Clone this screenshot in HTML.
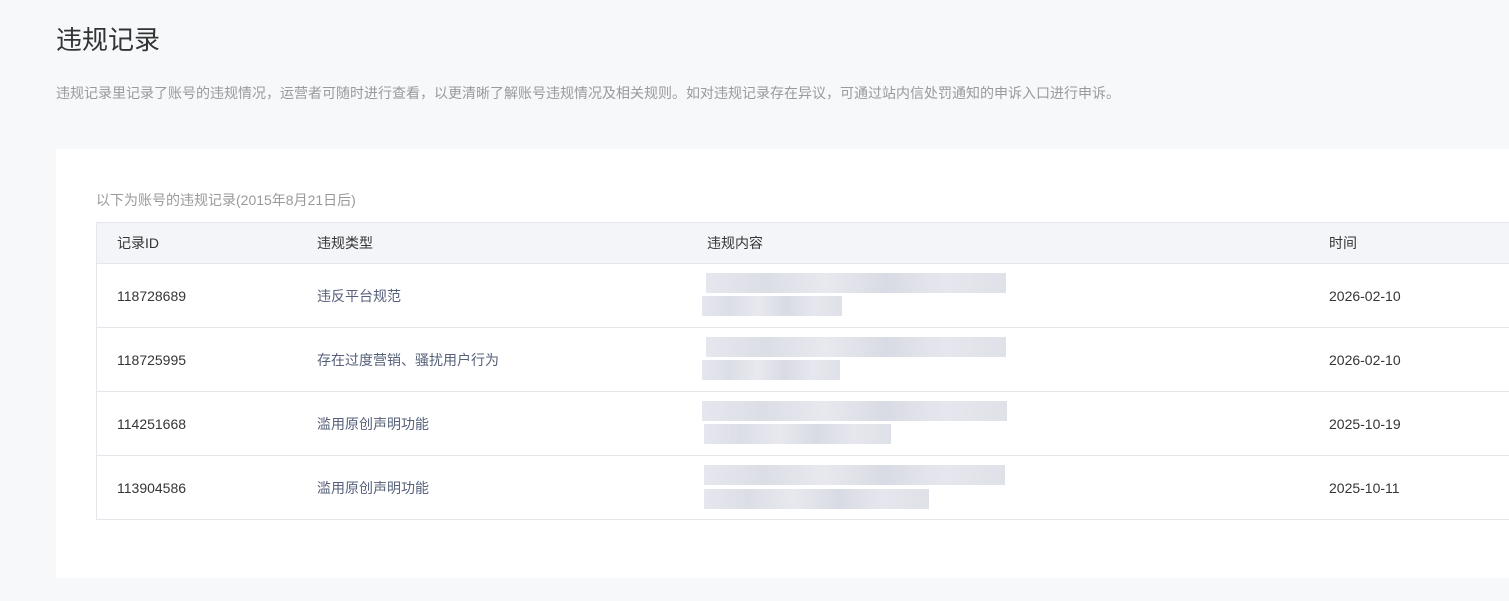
<!DOCTYPE html>
<html><head><meta charset="utf-8"><style>
body{margin:0;width:1509px;height:601px;background:#f7f8fa;font-family:"Liberation Sans","Noto Sans CJK SC",sans-serif;overflow:hidden;position:relative}
.t{position:absolute;left:56px;top:20px;font-size:26px;color:#333}
.d{position:absolute;left:56px;top:83px;font-size:14px;color:#9a9a9a;white-space:nowrap}
.card{position:absolute;left:56px;top:149px;width:1460px;height:429px;background:#fff}
.s{position:absolute;left:96px;top:190px;font-size:14px;color:#9a9a9a}
table{position:absolute;left:96px;top:222px;width:1420px;border-collapse:collapse;font-size:14px;color:#353535}
td,th{border-top:1px solid #e4e6eb;text-align:left;font-weight:normal;padding:0 0 0 20px;position:relative}
tr:last-child td{border-bottom:1px solid #e4e6eb}
th{background:#f4f5f8;height:40px;color:#353535}
td{height:63px}
tr>*:first-child{border-left:1px solid #e4e6eb}
.ty{color:#56607a}
.b{position:absolute;height:20px;background:linear-gradient(90deg,#e6e7ee,#dcdee6 20%,#e8e9ef 40%,#d9dbe4 60%,#e6e7ee 80%,#dfe1e8)}
</style></head><body>
<div class="t">违规记录</div>
<div class="d">违规记录里记录了账号的违规情况，运营者可随时进行查看，以更清晰了解账号违规情况及相关规则。如对违规记录存在异议，可通过站内信处罚通知的申诉入口进行申诉。</div>
<div class="card"></div>
<div class="s">以下为账号的违规记录(2015年8月21日后)</div>
<table>
<tr><th style="width:180px">记录ID</th><th style="width:370px">违规类型</th><th style="width:602px">违规内容</th><th>时间</th></tr>
<tr><td>118728689</td><td class="ty">违反平台规范</td><td><div class="b" style="left:19px;top:9px;width:300px"></div><div class="b" style="left:15px;top:32px;width:140px"></div></td><td>2026-02-10</td></tr>
<tr><td>118725995</td><td class="ty">存在过度营销、骚扰用户行为</td><td><div class="b" style="left:19px;top:9px;width:300px"></div><div class="b" style="left:15px;top:32px;width:138px"></div></td><td>2026-02-10</td></tr>
<tr><td>114251668</td><td class="ty">滥用原创声明功能</td><td><div class="b" style="left:15px;top:9px;width:305px"></div><div class="b" style="left:17px;top:32px;width:187px"></div></td><td>2025-10-19</td></tr>
<tr><td>113904586</td><td class="ty">滥用原创声明功能</td><td><div class="b" style="left:17px;top:9px;width:301px"></div><div class="b" style="left:17px;top:33px;width:225px"></div></td><td>2025-10-11</td></tr>
</table>
</body></html>
